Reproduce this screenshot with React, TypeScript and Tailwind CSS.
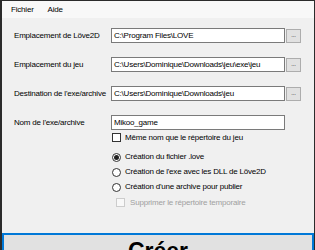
const font = "font-['Liberation_Sans','Arial',sans-serif]";

function PathRow({ label, value, browse = true }: { label: string; value: string; browse?: boolean }) {
  return (
    <div className="flex h-[15px] shrink-0 items-center">
      <div className="w-[97px] whitespace-nowrap leading-none">{label}</div>
      <div className="flex h-[15px] w-[174px] items-center whitespace-nowrap border border-[#7a7a7a] bg-white px-[2px] leading-none">
        {value}
      </div>
      {browse && (
        <div className="ml-px flex h-[14px] w-[15px] items-center justify-center border border-[#adadad] bg-[#e1e1e1] pb-[2px] text-[6px] leading-none">
          ...
        </div>
      )}
    </div>
  );
}

function Radio({ label, checked = false }: { label: string; checked?: boolean }) {
  return (
    <div className="flex h-[10px] shrink-0 items-center gap-[4px]">
      <div className="flex h-[9px] w-[9px] items-center justify-center rounded-full border border-[#333] bg-white">
        {checked && <div className="h-[5px] w-[5px] rounded-full bg-[#222]" />}
      </div>
      <span className="whitespace-nowrap leading-none">{label}</span>
    </div>
  );
}

export default function App() {
  return (
    <div className={`h-[250px] w-[315px] overflow-hidden bg-[#2b2b2b] pl-[2px] pr-px pt-px text-[8px] tracking-[-0.2px] text-black ${font}`}>
      <div className="flex h-full flex-col bg-[#f0f0f0]">
        {/* barre de menu */}
        <div className="flex h-[17px] shrink-0 items-center bg-[#f8f8f8] pl-[9px] leading-none">
          <span>Fichier</span>
          <span className="ml-[14px]">Aide</span>
        </div>

        <div className="mt-[10px] flex shrink-0 flex-col gap-[14px] pl-[12px]">
          <PathRow label="Emplacement de Löve2D" value={"C:\\Program Files\\LOVE"} />
          <PathRow label="Emplacement du jeu" value={"C:\\Users\\Dominique\\Downloads\\jeu\\exe\\jeu"} />
          <PathRow label="Destination de l'exe/archive" value={"C:\\Users\\Dominique\\Downloads\\jeu"} />
          <PathRow label="Nom de l'exe/archive" value="Mikoo_game" browse={false} />
        </div>

        <div className="ml-[110px] mt-[3px] flex shrink-0 flex-col">
          <div className="flex h-[9px] items-center gap-[4px]">
            <div className="h-[9px] w-[9px] border border-[#333] bg-white" />
            <span className="whitespace-nowrap leading-none">Même nom que le répertoire du jeu</span>
          </div>
          <div className="mt-[10px] flex flex-col gap-[5px]">
            <Radio label="Création du fichier .love" checked />
            <Radio label="Création de l'exe avec les DLL de Löve2D" />
            <Radio label="Création d'une archive pour publier" />
          </div>
          <div className="ml-[4px] mt-[6px] flex h-[9px] items-center gap-[5px] text-[#a0a0a0]">
            <div className="h-[9px] w-[9px] border border-[#cccccc] bg-[#f8f8f8]" />
            <span className="whitespace-nowrap leading-none">Supprimer le répertoire temporaire</span>
          </div>
        </div>

        <div className="mt-[26px] flex h-[40px] shrink-0 justify-center border-2 border-[#0078d7] bg-[#e1e1e1] pt-[5px]">
          <span className="text-[23px] font-bold leading-none tracking-normal">Créer</span>
        </div>
      </div>
    </div>
  );
}
